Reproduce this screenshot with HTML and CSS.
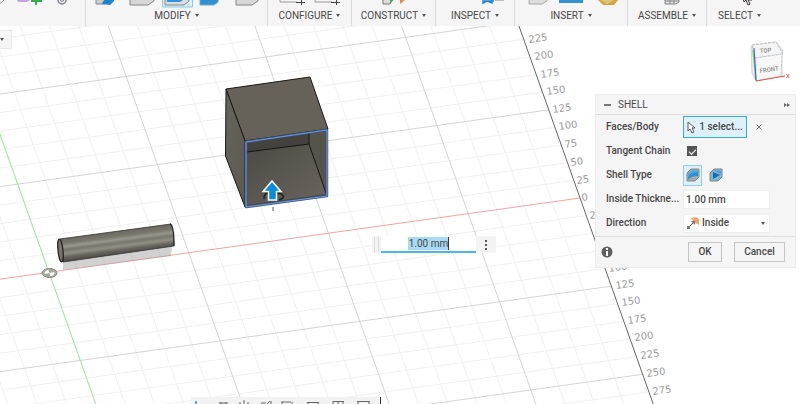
FILE: index.html
```html
<!DOCTYPE html>
<html lang="en">
<head>
<meta charset="utf-8">
<title>Shell</title>
<link rel="stylesheet" href="styles.css">
</head>
<body>
<header class="toolbar">
  <div class="group group-start">
    <svg width="85" height="9" viewBox="0 0 85 9"><path d="M-4 4 1 3 5-1" fill="#ddd" stroke="#999"/><path d="M17 0h13l-3 2h-9z" fill="#c4a3dd"/><path d="M36 0v5M31 1h11" stroke="#32ad42" stroke-width="2"/><circle cx="62" cy="0" r="4" fill="#eee" stroke="#788087" stroke-width="1.5"/><circle cx="62" cy="0" r="1.5" fill="none" stroke="#788087"/></svg>
  </div>
  <div class="group">
    <svg width="182" height="9" viewBox="85 0 182 9"><path d="M95-2h9v6h-9z" fill="#ccc" stroke="#888"/><path d="M101 4c1-4 4-6 12-6v3l-4 4z" fill="#1d83cd"/><path d="M129-2h24v3l-6 4h-18z" fill="#d7d7d7" stroke="#858585"/><path d="M161.500-1h30v8h-30z" fill="#d9f0fb" stroke="#8bccee"/><path d="M164-2h24v3l-5 4h-19z" fill="#ddd" stroke="#858585"/><path d="M166-2h16v2l-3 2h-13z" fill="#2e95dd"/><path d="M199-2h18v4l-4 3h-14z" fill="#348fd0" stroke="#68a8d8"/><path d="M235-2h22v3l-6 4h-16z" fill="#d7d7d7" stroke="#858585"/></svg>
    <button class="menu">MODIFY</button>
  </div>
  <div class="group">
    <svg width="84" height="9" viewBox="267 0 84 9"><path d="M279-1v3h17M314-1v3h17" fill="none" stroke="#999"/><path d="M295 2.500h9M300.500 0v5M330 2.500h9M335.500 0v5" stroke="#444"/></svg>
    <button class="menu">CONFIGURE</button>
  </div>
  <div class="group">
    <svg width="84" height="9" viewBox="351 0 84 9"><path d="M382-1v5h7l3-5" fill="#ddd" stroke="#777"/><path d="M389 3v-5h6z" fill="#28b45a"/><path d="M399 4v-5h6z" fill="#e58a42"/></svg>
    <button class="menu">CONSTRUCT</button>
  </div>
  <div class="group">
    <svg width="79" height="9" viewBox="435 0 79 9"><path d="M482-1v4l4-2 5 2v-4M483 1h10" fill="none" stroke="#2683cb" stroke-width="1.500"/><path d="M494 0h9" stroke="#888"/></svg>
    <button class="menu">INSPECT</button>
  </div>
  <div class="group">
    <svg width="113" height="9" viewBox="514 0 113 9"><path d="M528-2h18v3l-5 3h-13z" fill="#ddd" stroke="#aaa"/><path d="M558-1h24v4h-24z" fill="#3291d5"/><path d="M596-1h22l-5 6h-11z" fill="#cda94b"/><path d="m600 0 6 4 7-4z" fill="#e1c471"/></svg>
    <button class="menu">INSERT</button>
  </div>
  <div class="group">
    <svg width="79" height="9" viewBox="627 0 79 9"><path d="M664-2h14v4l-3 2h-11zM669-1v5M673-1v5M664 1h14" fill="#ddd" stroke="#888"/></svg>
    <button class="menu">ASSEMBLE</button>
  </div>
  <div class="group">
    <svg width="66" height="9" viewBox="706 0 66 9"><path d="m742-2 1 4 2-2 2 5 2-1-2-4h4" fill="#fff" stroke="#333"/></svg>
    <button class="menu">SELECT</button>
  </div>
</header>

<main class="canvas">
  <svg class="scene" viewBox="0 26 800 378" preserveAspectRatio="xMidYMid slice" role="img" aria-label="Model view">
    <defs>
      <linearGradient id="rod" x1="115" y1="232" x2="118" y2="255" gradientUnits="userSpaceOnUse">
        <stop offset="0" stop-color="#6b6961"/><stop offset=".2" stop-color="#7a776e"/><stop offset=".34" stop-color="#99968c"/><stop offset=".48" stop-color="#79766d"/><stop offset=".64" stop-color="#918e84"/><stop offset=".8" stop-color="#67645c"/><stop offset="1" stop-color="#4a4842"/>
      </linearGradient>
      <linearGradient id="side" x1="0" y1="0" x2="1" y2="1"><stop offset="0" stop-color="#67645d"/><stop offset="1" stop-color="#5c5952"/></linearGradient>
      <linearGradient id="floor" x1="0" y1="0" x2="1" y2="1"><stop offset="0" stop-color="#4c4944"/><stop offset="1" stop-color="#6a665e"/></linearGradient>
    </defs>
    <!-- Ground grid: one unit is one cell, the origin is at 0,0 -->
    <g class="grid" transform="matrix(27.95 -3.91 6.26 17.63 49 272.3)">
      <path class="minor" d="M-5-14H19M-5-13H19M-5-12H19M-5-11H19M-5-9H19M-5-8H19M-5-7H19M-5-6H19M-5-4H19M-5-3H19M-5-2H19M-5-1H19M-5 1H19M-5 2H19M-5 3H19M-5 4H19M-5 6H19M-5 7H19M-5 8H19M-5 9H19M-5 11H19M-5 12H19M-4-15V13M-3-15V13M-2-15V13M-1-15V13M1-15V13M2-15V13M3-15V13M4-15V13M6-15V13M7-15V13M8-15V13M9-15V13M11-15V13M12-15V13M13-15V13M14-15V13M16-15V13M17-15V13M18-15V13"/>
      <path class="major" d="M-5-10H19M-5-5H19M-5 5H19M-5 10H19M5-15V13M10-15V13M15-15V13"/>
      <path class="axis-x" d="M-5 0H19"/>
      <path class="axis-y" d="M0-15V13"/>
      <path class="edge" d="M19-15V13"/>
    </g>
    <g class="ticks">
      <text transform="translate(529 43) rotate(-8)">225</text>
      <text transform="translate(535 60) rotate(-8)">200</text>
      <text transform="translate(541 78) rotate(-8)">175</text>
      <text transform="translate(547 95) rotate(-8)">150</text>
      <text transform="translate(553 113) rotate(-8)">125</text>
      <text transform="translate(559 130) rotate(-8)">100</text>
      <text transform="translate(565 148) rotate(-8)">75</text>
      <text transform="translate(571 166) rotate(-8)">50</text>
      <text transform="translate(577 184) rotate(-8)">25</text>
      <text transform="translate(582 201) rotate(-8)">0</text>
      <text transform="translate(590 219) rotate(-8)">25</text>
      <text transform="translate(609 272) rotate(-8)">100</text>
      <text transform="translate(616 289) rotate(-8)">125</text>
      <text transform="translate(622 306) rotate(-8)">150</text>
      <text transform="translate(628 324) rotate(-8)">175</text>
      <text transform="translate(635 341) rotate(-8)">200</text>
      <text transform="translate(641 359) rotate(-8)">225</text>
      <text transform="translate(647 377) rotate(-8)">250</text>
      <text transform="translate(653 395) rotate(-8)">275</text>
    </g>
    <!-- Origin marker -->
    <ellipse cx="49.500" cy="273" rx="7.500" ry="4.500" fill="#a9a9a0" stroke="#85857c"/>
    <path d="m49.500 273-5 1c0-3 2-4 4-4zM49.500 273l5-1c0 3-2 4-4 4z" fill="#fff"/>
    <!-- Rod -->
    <path d="m63 261 109-15-1 10-108 14z" fill="#999" opacity=".45"/>
    <path d="m60 239 111-15q4 10 3 22l-111 16z" fill="url(#rod)"/>
    <path d="m60 239 111-15M63 262l111-16" stroke="#33312d" stroke-width=".8"/>
    <path d="M170 224q4 1 4 22" fill="none" stroke="#22211f" stroke-width="1.300"/>
    <ellipse cx="60.500" cy="250.500" rx="2.500" ry="11.500" transform="rotate(-6 60.500 250.500)" fill="#77746b" stroke="#22211f" stroke-width="1.200"/>
    <!-- Hollow box -->
    <g stroke-linejoin="round">
      <path d="m226 89 84-12 18 52-83 12z" fill="#66625a" stroke="#191816"/>
      <path d="m226 89 19 52v66l-19.500-51z" fill="url(#side)" stroke="#191816"/>
      <path d="m245 141 83-12v67l-83 11z" fill="#4a4741"/>
      <path d="m247 142 62-9v11l-62 8z" fill="#45423d"/>
      <path d="m309 133 17-3v63l-17-49z" fill="#56534a"/>
      <path d="m247 152 62-8 17 50-79 11z" fill="url(#floor)"/>
      <path d="m247 152 62-8v-11M309 144l17 49" fill="none" stroke="#171614"/>
      <path d="m246 142 81-12v66l-81 11z" fill="none" stroke="#2d5797" stroke-width="2.500"/>
      <path d="m246 142 81-12v66l-81 11z" fill="none" stroke="#a9b8cc" stroke-width=".7"/>
    </g>
    <!-- Offset handle -->
    <path d="M264 199q0-6 4-6M277 193q8 1 6 5l-4 2" fill="none" stroke="#22211f" stroke-width="1.500"/>
    <path d="M273 207v4" stroke="#555"/>
    <path d="m272 181 9 10.500h-4.500v8.500h-8v-8.500H263z" fill="#078edb" stroke="#fff" stroke-width="1.500"/>
    <!-- View cube -->
    <g class="cube">
      <path d="m751 46 25-4 7 8-1 5v21l-26 5-4-8z" fill="#eee" stroke="#d5d5d5"/>
      <path d="m752 45 24-3 7 12-28 4z" fill="#f4f4f4" stroke="#bbb" stroke-dasharray="3 1"/>
      <path d="m756 58 26-4-1 22-25 5z" fill="#f7f7f7" stroke="#ccc" stroke-dasharray="3 1"/>
      <path d="m753 50 3 31" stroke="#6bdc69" stroke-width="1.500"/><path d="m754 48 2 32" stroke="#484fe8"/>
      <path d="m756 81 29-5" stroke="#e65050"/>
      <text class="cube-text" transform="translate(760 53) rotate(-5)">TOP</text>
      <text class="cube-text" transform="translate(760 73) rotate(-8)">FRONT</text>
      <text class="cube-x" x="786" y="78">X</text>
    </g>
  </svg>

  <button class="browser-tab" aria-label="Browser"></button>

  <form class="value-box">
    <span class="grip"></span>
    <input class="value" type="text" value="1.00 mm" aria-label="Thickness">
    <button class="more" type="button" aria-label="More"><svg width="4" height="12"><path d="M1 1h2v2H1zM1 5h2v2H1zM1 9h2v2H1z" fill="#555"/></svg></button>
  </form>

  <form class="dialog">
    <header class="dialog-head"><i class="dash"></i><h2>SHELL</h2><svg width="6" height="6" viewBox="0 0 6 6"><path d="m0 1 3 2-3 2zM3 1l3 2-3 2z" fill="#666"/></svg></header>
    <div class="rows">
      <div class="row"><label for="faces">Faces/Body</label>
        <button class="pick" id="faces" type="button"><svg width="9" height="13" viewBox="0 0 9 13"><path d="M1 1v9l2-2 2 4 2-1-2-4h3z" fill="#fff" stroke="#555"/></svg>1 select...</button>
        <button class="clear" type="button" aria-label="Clear"><svg width="6" height="6"><path d="m.5.5 5 5m0-5-5 5" stroke="#777"/></svg></button></div>
      <div class="row"><label for="tangent">Tangent Chain</label><input class="check" id="tangent" type="checkbox" checked></div>
      <div class="row"><span>Shell Type</span>
        <span class="types">
        <button class="type active" type="button" aria-label="Sharp"><svg width="14" height="14" viewBox="0 0 14 14"><path d="m1 5 4-4h8v8l-4 4H1z" fill="#aaa" stroke="#888"/><path d="M2 12V6q1-4 10-4v6q-7 0-10 4z" fill="#2f93d8"/><path d="M2 6q1-4 10-4v2q-8 0-10 5z" fill="#55abe2"/></svg></button>
        <button class="type" type="button" aria-label="Rounded"><svg width="14" height="14" viewBox="0 0 14 14"><path d="m1 5 4-4h8v8l-4 4H1z" fill="#7db4da" stroke="#888"/><path d="m4 4 7 3-7 4z" fill="#126ead"/><path d="m5 2 7 1v3z" fill="#3ca1e0"/></svg></button>
        </span></div>
      <div class="row"><label for="inside">Inside Thickne...</label><input class="field" id="inside" type="text" value="1.00 mm"></div>
      <div class="row"><label for="direction">Direction</label>
        <span class="select-wrap"><svg width="14" height="14" viewBox="0 0 14 14"><path d="m5 2 5-1 3 2v6l-5-3z" fill="#f3a268"/><path d="m2 12 6-6" stroke="#555"/><path d="m5 5 4 0v4M1 10h3v3H1z" fill="#777"/></svg><select id="direction"><option>Inside</option></select></span></div>
    </div>
    <footer class="dialog-foot">
      <svg class="info" width="12" height="12" viewBox="0 0 12 12"><circle cx="6" cy="6" r="5.500" fill="#606060"/><path d="M5 2h2v2H5zM5 5h2v5H5z" fill="#fff"/></svg>
      <button class="action" type="button">OK</button><button class="action wide" type="button">Cancel</button>
    </footer>
  </form>

  <nav class="navbar" aria-label="Navigation">
    <svg width="190" height="7" viewBox="191 397 190 7"><path d="M196 401v3" stroke="#258fc9" stroke-width="1.500"/><path d="M219 403h9M221 402v2M226 402v2M240 402v2M244 400v4M248 402v2M261 403h5M270 401l-3 3M271 401v3M281 402h10M282 402v2M292 402v2M307 402.500h12M308 402v2M318 402v2M333 401.500h11M333 401v3M338 401v3M343 401v3M357 401.500h13M358 401v3M369 401v3" fill="none" stroke="#666"/><path d="M380.500 397v7" stroke="#333"/></svg>
  </nav>
</main>
</body>
</html>
```
FILE: styles.css
```css
* { box-sizing: border-box; }

body {
  margin: 0;
  min-height: 100vh;
  display: grid;
  grid-template-rows: auto 1fr;
  overflow: hidden;
  background: #fff;
  color: #484848;
  font: 500 10px/12px Roboto, "Noto Sans", sans-serif;
}

button, input, select { font: inherit; color: inherit; margin: 0; }
button { padding: 0; border: 0; background: none; }
svg { display: block; flex: none; }

.toolbar {
  display: grid;
  grid-template-columns: 85fr 182fr 84fr 84fr 79fr 113fr 79fr 66fr 28fr;
  background: #f5f5f5;
  height: 26px;
}

.group {
  display: flex;
  flex-direction: column;
  align-items: center;
  overflow: hidden;
  border-left: 1px solid #d9d9d9;
}

.group-start { border-left: 0; }

.menu {
  display: flex;
  align-items: center;
  gap: 4px;
  font-weight: 400;
  line-height: 13px;
}

.menu::after, .browser-tab::after {
  content: "";
  border: 2px solid transparent;
  border-top: 3px solid #555;
  border-bottom: 0;
}

.canvas { position: relative; min-height: 0; overflow: hidden; }
.scene { position: absolute; inset: 0; width: 100%; height: 100%; }

.grid path { fill: none; stroke-width: 1; vector-effect: non-scaling-stroke; }
.grid .minor { stroke: #f0f0f0; }
.grid .major { stroke: #d4d4d4; }
.grid .axis-x { stroke: #f5a3a3; }
.grid .axis-y { stroke: #8bea92; }
.grid .edge { stroke: #666; }

.ticks { font: 400 10px "DejaVu Sans", sans-serif; fill: #999; }
.cube-text { font-size: 6px; fill: #888; }
.cube-x { font-size: 6px; fill: #e65050; }

.browser-tab {
  position: absolute;
  left: 0;
  top: 4px;
  width: 12px;
  height: 19px;
  display: flex;
  align-items: center;
  background: #f5f5f5;
  border: 1px solid #e8e8e8;
  border-left: 0;
}

.value-box {
  position: absolute;
  left: 46.5%;
  top: 210px;
  display: flex;
  height: 17px;
  background: #f3f3f3;
}

.grip {
  width: 5px;
  margin: 1px 2px;
  border: solid #ddd;
  border-width: 0 1px;
}

.value {
  width: 95px;
  padding: 0;
  border: 0;
  border-bottom: 2px solid #4bb8e0;
  outline: 0;
  text-align: center;
  font-weight: 400;
  background:
    linear-gradient(#333, #333) 67px 1px / 1px 13px no-repeat,
    linear-gradient(#a9daf3, #a9daf3) 27px 1px / 40px 13px no-repeat,
    #fff;
}

.more { width: 20px; display: grid; place-items: center; }

.dialog {
  position: absolute;
  top: 68px;
  right: 4px;
  width: 201px;
  background: #f5f5f5;
  border: 1px solid #ececec;
}

.dialog-head {
  display: flex;
  align-items: center;
  gap: 7px;
  height: 20px;
  padding: 0 5px 0 8px;
  border-bottom: 1px solid #ddd;
}

.dialog-head h2 { flex: 1; margin: 0; font-size: 10px; font-weight: 400; }
.dash { width: 7px; height: 2px; background: #777; }
.rows { padding: 0 10px 1px; border-bottom: 1px solid #ddd; }

.row {
  display: grid;
  grid-template-columns: 77px 1fr auto;
  align-items: center;
  height: 24px;
}

.pick {
  display: flex;
  align-items: center;
  justify-content: center;
  gap: 3px;
  height: 22px;
  width: 64px;
  background: #def1fa;
  border: 1px solid #34aadc;
}

.clear { padding: 4px 23px 4px 0; }

.check {
  appearance: none;
  width: 10px;
  height: 10px;
  margin-left: 4px;
  background: #555;
  display: grid;
  place-items: center;
}

.check:checked::after {
  content: "";
  width: 6px;
  height: 3px;
  border: solid #fff;
  border-width: 0 0 1px 1px;
  transform: rotate(-45deg);
}

.types { display: flex; gap: 4px; }
.type { display: grid; place-items: center; width: 19px; height: 21px; border: 1px solid transparent; }
.type.active { background: #def1fa; border-color: #8fd0ef; }

.field, .select-wrap {
  width: 87px;
  height: 19px;
  background: #fff;
  border: 1px solid #eee;
}

.field { padding: 0 2px; }
.select-wrap { display: flex; align-items: center; gap: 2px; padding: 0 4px 0 2px; }

.select-wrap select {
  flex: 1;
  appearance: none;
  padding: 0;
  border: 0;
  background: #fff;
}

.select-wrap::after {
  content: "";
  border: 2px solid transparent;
  border-top: 3px solid #555;
  border-bottom: 0;
}

.dialog-foot {
  display: flex;
  align-items: center;
  gap: 12px;
  height: 30px;
  padding: 0 10px 0 5px;
}

.info { margin-right: auto; }

.action {
  width: 34px;
  height: 20px;
  border: 1px solid #c4c4c4;
}

.action.wide { width: 51px; }

.navbar {
  position: absolute;
  left: 191px;
  bottom: 0;
  background: #f2f2f2;
}
```
